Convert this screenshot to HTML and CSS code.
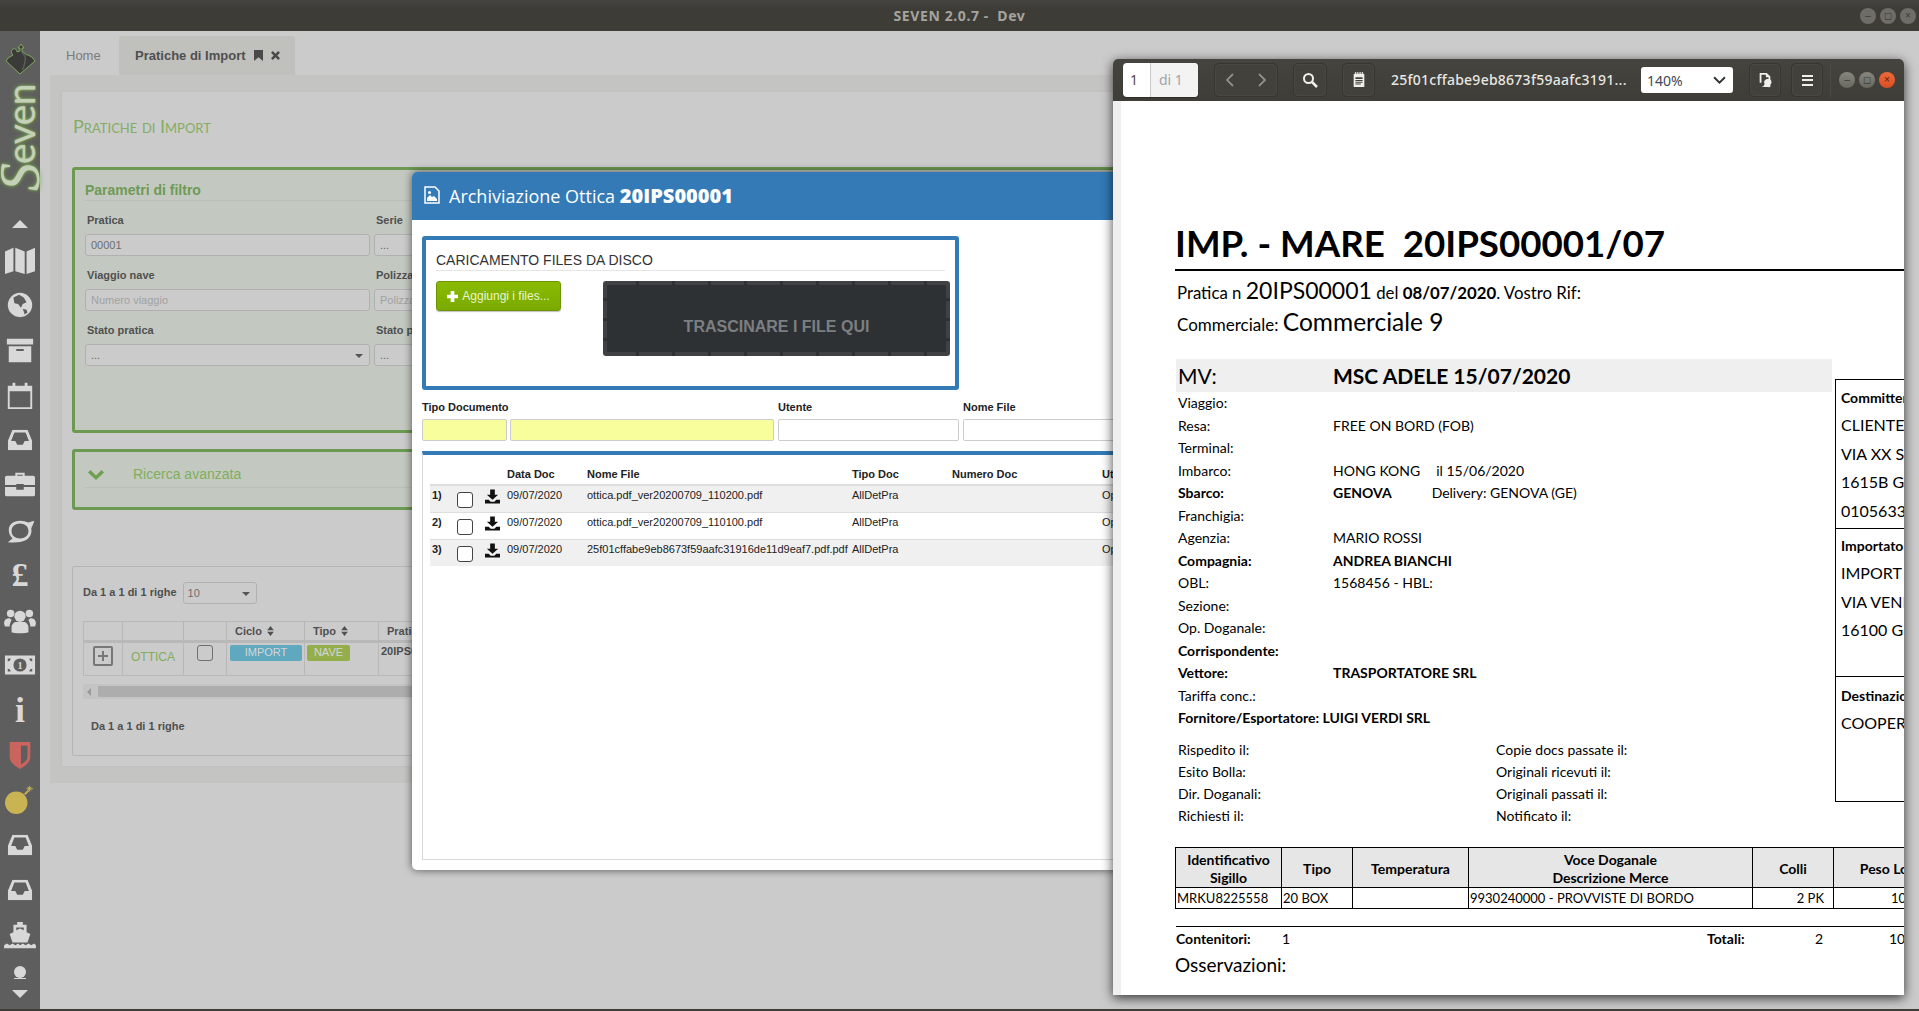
FILE: index.html
```html
<!DOCTYPE html>
<html lang="en">
<head>
    <meta charset="UTF-8">
    <title>SEVEN 2.0.7 - Dev</title>
    <link rel="stylesheet" href="styles.css">
</head>
<body>
    <svg class="defs" width="0" height="0">
        <symbol id="i-inbox" viewBox="0 0 26 22"><path d="M5 0h16l5 12v10H0V12zM7 3L3.5 12H8l2 4h6l2-4h4.500L19 3z" fill-rule="evenodd"/></symbol>
        <symbol id="i-download" viewBox="0 0 16 15"><path d="M5.500 0h5v5.500H14L8 11 2 5.500h3.500zM0 11h4l2 2h4l2-2h4v4H0z"/></symbol>
        <symbol id="i-sort" viewBox="0 0 8 12"><path d="M4 0l4 5H0zM4 12L0 7h8z"/></symbol>
    </svg>

    <header class="titlebar">
        <span class="titlebar-text">SEVEN 2.0.7 - &nbsp;Dev</span>
        <div class="titlebar-btns">
            <span class="wm-btn">&#8211;</span>
            <span class="wm-btn">&#9723;</span>
            <span class="wm-btn">&#215;</span>
        </div>
    </header>

    <div class="app">
        <nav class="sidebar">
            <svg class="logo-mark" viewBox="1 0 30 31">
                <path d="M16 30L2 17l2-3 5-3c-2-2-2-5 0-6 2-1 4 1 4 3l3-1V4l-2 0 3-4 3 4h-2v4c3 0 3 3 6 3l4 2 3 4z" fill="#3b3b39" stroke="#7fa95a" stroke-width="1"/>
                <path d="M18 9c3 2 4 4 3 8-1 3 0 6-3 9" fill="none" stroke="#5e5e5e" stroke-width="1.400"/>
            </svg>
            <div class="logo-text"><span class="logo-s">S</span>even</div>
            <div class="nav-icons">
                <svg class="ni ni-caret" viewBox="0 0 12 6"><path d="M6 0l6 6H0z"/></svg>
                <svg class="ni" viewBox="0 0 32 32"><path d="M0 7l9-4v25l-9 3zM11 3l10 4v24l-10-3zM23 7l9-4v25l-9 3z"/></svg>
                <svg class="ni" viewBox="0 0 32 32"><circle cx="16" cy="16" r="13"/><path d="M9 8l6-3 5 3 3 5-4 2-2 4-3-4-4-1zM19 20l4 1 1 3-3 2z" fill="#5e5e5e"/></svg>
                <svg class="ni" viewBox="0 0 32 32"><path d="M2 4h28v6H2zM4 12h24v17H4zM12 15v2h8v-2z" fill-rule="evenodd"/></svg>
                <svg class="ni" viewBox="0 0 32 32"><path d="M3 6h5V3h3v3h10V3h3v3h5v25H3zM5 12v17h22V12z" fill-rule="evenodd"/></svg>
                <svg class="ni" viewBox="0 0 32 32"><use href="#i-inbox" x="3" y="5" width="26" height="22"/></svg>
                <svg class="ni" viewBox="0 0 32 32"><path d="M11 6V3h10v3h9a2 2 0 0 1 2 2v8H20v-1h-8v1H0V8a2 2 0 0 1 2-2zM13 5v1h6V5zM0 18h12v3h8v-3h12v8a2 2 0 0 1-2 2H2a2 2 0 0 1-2-2z" fill-rule="evenodd"/></svg>
                <svg class="ni" viewBox="0 0 32 32"><path d="M16 6c-7 0-12 4-12 10 0 4 2 7 4 9l-5 4c9 1 14 0 19-2 5-3 7-8 6-13 2-4 3-6 3-8l-6 2c-2-1-6-2-9-2zm0 3c5 0 9 3 9 8s-4 8-9 8-9-3-9-8 4-8 9-8z" fill-rule="evenodd"/></svg>
                <span class="ni-glyph">&#163;</span>
                <svg class="ni" viewBox="0 0 34 32"><circle cx="7" cy="9" r="4"/><circle cx="27" cy="9" r="4"/><circle cx="17" cy="12" r="6"/><path d="M0 20c0-5 3-6 6-6l2 2c-1 2-2 4-2 7H1zM34 20c0-5-3-6-6-6l-2 2c1 2 2 4 2 7h5zM8 29v-5c0-4 3-6 5-6h8c2 0 5 2 5 6v5c-2 1-5 1-9 1s-7 0-9-1z"/></svg>
                <svg class="ni" viewBox="0 0 34 24"><path d="M1 2h32v20H1zM4 5v14h3c0-2-1-3-3-3V8c2 0 3-1 3-3zM30 5h-3c0 2 1 3 3 3zM30 16c-2 0-3 1-3 3h3z" fill-rule="evenodd"/><circle cx="17" cy="12" r="7" fill="#5e5e5e"/><text class="ni-one" x="17" y="16">1</text></svg>
                <span class="ni-glyph ni-i">i</span>
                <svg class="ni" viewBox="0 0 32 32"><path d="M5 2h22v16c0 6-6 10-11 13C11 28 5 24 5 18z" fill="#c9645e"/><path d="M17 6h7v12c0 3-3 6-7 8z" fill="#5e5e5e"/></svg>
                <svg class="ni" viewBox="0 0 32 32"><circle cx="12" cy="19" r="12" fill="#c9b352"/><path d="M21 10l4-4" stroke="#c9b352" stroke-width="2"/><path d="M26 1v6M23 4h7M24 2l4 4M28 2l-4 4" stroke="#c9b352" stroke-width="1"/></svg>
                <svg class="ni" viewBox="0 0 32 32"><use href="#i-inbox" x="3" y="5" width="26" height="22"/></svg>
                <svg class="ni" viewBox="0 0 32 32"><use href="#i-inbox" x="3" y="5" width="26" height="22"/></svg>
                <svg class="ni" viewBox="0 0 34 32"><path d="M14 2h6v3h4v8l4 2-3 9H9L6 15l4-2V5h4zM13 8v3l4-2 4 2V8z" fill-rule="evenodd"/><path d="M0 27l3-2 3 2 3-2 3 2 3-2 2 2 3-2 3 2 3-2 3 2 3-2 2 2v3H0z"/></svg>
            </div>
            <div class="nav-user">
                <svg class="ni ni-user" viewBox="0 0 14 13"><circle cx="7" cy="6" r="6"/><path d="M1 13h12v-1H1z"/></svg>
                <svg class="ni ni-caret" viewBox="0 0 12 6"><path d="M0 0h12L6 6z"/></svg>
            </div>
        </nav>

        <main class="main">
            <div class="tabs">
                <span class="tab">Home</span>
                <span class="tab tab-active">Pratiche di Import
                    <svg class="tab-ic" viewBox="0 0 10 12"><path d="M0 0h10v12L5 8l-5 4z"/></svg>
                    <svg class="tab-ic" viewBox="0 0 10 10"><path d="M2 0l3 3 3-3 2 2-3 3 3 3-2 2-3-3-3 3-2-2 3-3-3-3z"/></svg>
                </span>
            </div>
            <div class="tab-content">
                <div class="page">
                    <h1 class="page-title">Pratiche di Import</h1>

                    <section class="panel panel-filter">
                        <h3 class="panel-title">Parametri di filtro</h3>
                        <div class="filter-grid">
                            <div class="field"><label>Pratica</label><div class="fake-input">00001</div></div>
                            <div class="field"><label>Serie</label><div class="fake-input dots">...</div></div>
                            <div class="field"><label>Viaggio nave</label><div class="fake-input ph">Numero viaggio</div></div>
                            <div class="field"><label>Polizza</label><div class="fake-input ph">Polizza</div></div>
                            <div class="field"><label>Stato pratica</label><div class="fake-input fake-select dots">...</div></div>
                            <div class="field"><label>Stato pagamento</label><div class="fake-input dots">...</div></div>
                        </div>
                    </section>

                    <section class="panel panel-search">
                        <div class="search-head">
                            <svg class="chev" viewBox="0 0 16 10"><path d="M2.500 0L8 5.500 13.500 0 16 2.500 8 10 0 2.500z"/></svg>
                            <span>Ricerca avanzata</span>
                        </div>
                    </section>

                    <section class="grid-box">
                        <div class="grid-top">
                            <span class="grid-count">Da 1 a 1 di 1 righe</span>
                            <div class="fake-input page-size">10</div>
                        </div>
                        <table class="grid-table">
                            <colgroup><col class="c1"><col class="c2"><col class="c3"><col class="c4"><col class="c5"><col class="c6"></colgroup>
                            <thead>
                                <tr>
                                    <th></th><th></th><th></th>
                                    <th>Ciclo <svg class="sort"><use href="#i-sort"/></svg></th>
                                    <th>Tipo <svg class="sort"><use href="#i-sort"/></svg></th>
                                    <th>Pratica</th>
                                </tr>
                            </thead>
                            <tbody>
                                <tr>
                                    <td class="center"><span class="plus-box"></span></td>
                                    <td class="ottica">OTTICA</td>
                                    <td class="center"><span class="check check-dim"></span></td>
                                    <td><span class="badge badge-blue">IMPORT</span></td>
                                    <td><span class="badge badge-green">NAVE</span></td>
                                    <td class="bold-cell">20IPS00001</td>
                                </tr>
                            </tbody>
                        </table>
                        <div class="hscroll"><span class="hscroll-arrow"></span><span class="hscroll-thumb"></span></div>
                        <div class="grid-bottom">Da 1 a 1 di 1 righe</div>
                    </section>
                </div>
            </div>
        </main>
    </div>

    <!-- modal archiviazione -->
    <div class="modal">
        <div class="modal-head">
            <svg class="modal-ic" viewBox="0 0 16 18"><path d="M1 1h10l4 4v12H1z" fill="none" stroke="#fff" stroke-width="1.500"/><path d="M3 15v-3l3-3 2 2 2-1 3 3v2z" fill="#fff"/><circle cx="5.500" cy="6.500" r="1.500" fill="#fff"/></svg>
            <span>Archiviazione Ottica <b>20IPS00001</b></span>
        </div>
        <div class="modal-body">
            <div class="upload-box">
                <div class="upload-title">CARICAMENTO FILES DA DISCO</div>
                <div class="upload-row">
                    <button class="add-btn"><svg class="add-ic" viewBox="0 0 12 12"><path d="M4 0h4v4h4v4H8v4H4V8H0V4h4z"/></svg>Aggiungi i files...</button>
                    <div class="dropzone">TRASCINARE I FILE QUI</div>
                </div>
            </div>
            <div class="search-fields">
                <div class="sf sf-tipo">
                    <label>Tipo Documento</label>
                    <div class="sf-pair"><span class="sf-input yellow sf-code"></span><span class="sf-input yellow sf-desc"></span></div>
                </div>
                <div class="sf sf-user"><label>Utente</label><span class="sf-input"></span></div>
                <div class="sf sf-name"><label>Nome File</label><span class="sf-input"></span></div>
            </div>
            <div class="files-frame">
                <table class="files">
                    <colgroup><col class="f1"><col class="f2"><col class="f3"><col class="f4"><col class="f5"><col class="f6"><col class="f7"><col class="f8"></colgroup>
                    <thead>
                        <tr><th></th><th></th><th></th><th>Data Doc</th><th>Nome File</th><th>Tipo Doc</th><th>Numero Doc</th><th>Utente</th></tr>
                    </thead>
                    <tbody>
                        <tr>
                            <td class="idx">1)</td><td><span class="check"></span></td><td><svg class="dl"><use href="#i-download"/></svg></td>
                            <td>09/07/2020</td><td>ottica.pdf_ver20200709_110200.pdf</td><td>AllDetPra</td><td></td><td>Op</td>
                        </tr>
                        <tr>
                            <td class="idx">2)</td><td><span class="check"></span></td><td><svg class="dl"><use href="#i-download"/></svg></td>
                            <td>09/07/2020</td><td>ottica.pdf_ver20200709_110100.pdf</td><td>AllDetPra</td><td></td><td>Op</td>
                        </tr>
                        <tr>
                            <td class="idx">3)</td><td><span class="check"></span></td><td><svg class="dl"><use href="#i-download"/></svg></td>
                            <td>09/07/2020</td><td>25f01cffabe9eb8673f59aafc31916de11d9eaf7.pdf.pdf</td><td>AllDetPra</td><td></td><td>Op</td>
                        </tr>
                    </tbody>
                </table>
            </div>
        </div>
    </div>

    <!-- finestra pdf -->
    <div class="pdf-window">
        <div class="pdf-toolbar">
            <div class="pg-entry"><span class="pg-num">1</span><span class="pg-of">di 1</span></div>
            <div class="tb-btn tb-nav">
                <svg class="tb-ic" viewBox="0 0 10 16"><path d="M8 2L2 8l6 6" fill="none" stroke="#8f8e88" stroke-width="1.800"/></svg>
                <svg class="tb-ic" viewBox="0 0 10 16"><path d="M2 2l6 6-6 6" fill="none" stroke="#8f8e88" stroke-width="1.800"/></svg>
            </div>
            <div class="tb-btn tb-search"><svg class="tb-ic" viewBox="0 0 16 16"><circle cx="6.500" cy="6.500" r="4.500" fill="none" stroke="#f0efec" stroke-width="2"/><path d="M10 10l5 5" stroke="#f0efec" stroke-width="2.500"/></svg></div>
            <div class="tb-btn tb-doc"><svg class="tb-ic" viewBox="0 0 14 18"><path d="M2 2h10a1 1 0 0 1 1 1v13a1 1 0 0 1-1 1H2a1 1 0 0 1-1-1V3a1 1 0 0 1 1-1zM3 6v2h8V6zM3 9v1h8V9zM3 11v1h8v-1zM3 13v1h6v-1z" fill="#f0efec" fill-rule="evenodd"/><path d="M3 0v3M5 0v3M7 0v3M9 0v3M11 0v3" stroke="#f0efec"/></svg></div>
            <div class="pdf-name">25f01cffabe9eb8673f59aafc3191...</div>
            <div class="zoom-select"><span>140%</span><svg class="zoom-chev" viewBox="0 0 12 8"><path d="M1 1l5 5 5-5" fill="none" stroke="#333" stroke-width="1.800"/></svg></div>
            <div class="tb-btn tb-page"><svg class="tb-ic" viewBox="0 0 14 18"><path d="M1 1h8l4 4v12H4v-1h2l1-2a4 4 0 0 1-1-3 4 4 0 0 1 5-3V6H8V3H3v9H1z" fill="#f0efec"/><path d="M9 14a3 3 0 1 0-1-1l-2 3" fill="none" stroke="#f0efec" stroke-width="1.500"/><path d="M10 13l2 4" stroke="#f0efec" stroke-width="1.500"/></svg></div>
            <div class="tb-btn tb-menu"><span class="burger"></span></div>
            <div class="pdf-wm">
                <span class="wm-btn2">&#8211;</span>
                <span class="wm-btn2">&#9723;</span>
                <span class="wm-btn2 wm-close">&#215;</span>
            </div>
        </div>
        <div class="pdf-page">
            <h1 class="doc-title">IMP. - MARE &nbsp;20IPS00001/07</h1>
            <p class="doc-line">Pratica n <span class="big">20IPS00001</span> del <b>08/07/2020</b>. Vostro Rif:</p>
            <p class="doc-line doc-line2">Commerciale: <span class="big">Commerciale 9</span></p>

            <div class="doc-main">
                <div class="doc-left">
                    <div class="mv-row"><span class="mv-label">MV:</span><b>MSC ADELE 15/07/2020</b></div>
                    <div class="dl-row"><span>Viaggio:</span></div>
                    <div class="dl-row"><span>Resa:</span><span>FREE ON BORD (FOB)</span></div>
                    <div class="dl-row"><span>Terminal:</span></div>
                    <div class="dl-row"><span>Imbarco:</span><span>HONG KONG<i class="sp1"></i>il 15/06/2020</span></div>
                    <div class="dl-row"><b>Sbarco:</b><span><b>GENOVA</b><i class="sp2"></i>Delivery: GENOVA (GE)</span></div>
                    <div class="dl-row"><span>Franchigia:</span></div>
                    <div class="dl-row"><span>Agenzia:</span><span>MARIO ROSSI</span></div>
                    <div class="dl-row"><b>Compagnia:</b><b>ANDREA BIANCHI</b></div>
                    <div class="dl-row"><span>OBL:</span><span>1568456 - HBL:</span></div>
                    <div class="dl-row"><span>Sezione:</span></div>
                    <div class="dl-row"><span>Op. Doganale:</span></div>
                    <div class="dl-row"><b>Corrispondente:</b></div>
                    <div class="dl-row"><b>Vettore:</b><b>TRASPORTATORE SRL</b></div>
                    <div class="dl-row"><span>Tariffa conc.:</span></div>
                    <div class="dl-row"><b>Fornitore/Esportatore: LUIGI VERDI SRL</b></div>
                    <div class="dates">
                        <span>Rispedito il:</span><span>Copie docs passate il:</span>
                        <span>Esito Bolla:</span><span>Originali ricevuti il:</span>
                        <span>Dir. Doganali:</span><span>Originali passati il:</span>
                        <span>Richiesti il:</span><span>Notificato il:</span>
                    </div>
                </div>
                <div class="doc-right">
                    <div class="party party1">
                        <b>Committente</b><span>CLIENTE SPA</span><span>VIA XX SETTEMBRE</span><span>1615B GENOVA</span><span>01056330000</span>
                    </div>
                    <div class="party party2">
                        <b>Importatore</b><span>IMPORT SRL</span><span>VIA VENEZIA</span><span>16100 GENOVA</span>
                    </div>
                    <div class="party party3">
                        <b>Destinazione</b><span>COOPERATIVA</span>
                    </div>
                </div>
            </div>

            <table class="doc-table">
                <colgroup><col class="d1"><col class="d2"><col class="d3"><col class="d4"><col class="d5"><col class="d6"></colgroup>
                <thead>
                    <tr><th>Identificativo<br>Sigillo</th><th>Tipo</th><th>Temperatura</th><th>Voce Doganale<br>Descrizione Merce</th><th>Colli</th><th>Peso Lordo</th></tr>
                </thead>
                <tbody>
                    <tr><td>MRKU8225558</td><td>20 BOX</td><td></td><td>9930240000 - PROVVISTE DI BORDO</td><td class="num">2 PK</td><td class="num-left">10</td></tr>
                </tbody>
            </table>
            <div class="totals">
                <b>Contenitori:</b><span>1</span><b>Totali:</b><span>2</span><span>10</span>
            </div>
            <div class="notes">Osservazioni:</div>
        </div>
    </div>
</body>
</html>
```

FILE: styles.css
```css
* {
    box-sizing: border-box;
}
html, body {
    margin: 0;
    height: 100%;
}
body {
    width: 1919px;
    height: 1011px;
    overflow: hidden;
    position: relative;
    display: flex;
    flex-direction: column;
    font-family: "Liberation Sans", Arial, sans-serif;
    font-size: 11px;
    color: #4d4d4d;
    background-color: #cbcbcb;
    border-bottom: 2px solid #3e3d38;
}
.defs {
    position: absolute;
}

/* title bar */
.titlebar {
    height: 31px;
    flex: none;
    display: flex;
    align-items: center;
    justify-content: center;
    position: relative;
    background: linear-gradient(#454440, #3d3c37 30%);
}
.titlebar-text {
    font-family: "Noto Sans", sans-serif;
    font-weight: 700;
    font-size: 14px;
    letter-spacing: 0.6px;
    color: #a5a49e;
}
.titlebar-btns {
    position: absolute;
    right: 3px;
    top: 8px;
    display: flex;
    gap: 4px;
}
.wm-btn {
    width: 16px;
    height: 16px;
    border-radius: 50%;
    background-color: #6e6d68;
    color: #3e3d38;
    font-size: 10px;
    line-height: 16px;
    text-align: center;
}

/* app frame */
.app {
    flex: 1;
    display: flex;
    min-height: 0;
}
.sidebar {
    width: 40px;
    flex: none;
    background-color: #5e5e5e;
    display: flex;
    flex-direction: column;
    align-items: center;
}
.logo-mark {
    width: 32px;
    height: 31px;
    margin-top: 13px;
}
.logo-text {
    writing-mode: vertical-rl;
    transform: rotate(180deg);
    font-family: Lato, sans-serif;
    font-weight: 400;
    font-size: 39px;
    letter-spacing: -0.5px;
    line-height: 34px;
    height: 116px;
    margin-top: 0;
    white-space: nowrap;
    color: #c5d0ba;
    text-shadow: 0 0 2px #a4d46a, 0 0 5px #6f9d45;
}
.logo-s {
    font-family: "Liberation Serif", serif;
    font-style: italic;
    font-size: 56px;
    letter-spacing: -1px;
}
.nav-icons {
    margin-top: 29px;
    display: flex;
    flex-direction: column;
    align-items: center;
    gap: 15px;
}
.ni {
    display: block;
    width: 32px;
    height: 30px;
    fill: #d8d8d8;
}
.ni-caret {
    height: 8px;
}
.nav-icons .ni-caret {
    margin-bottom: 2px;
}
.ni-user {
    height: 13px;
}
.ni-glyph {
    display: block;
    height: 30px;
    line-height: 30px;
    font-family: "Liberation Serif", serif;
    font-weight: 700;
    font-size: 34px;
    color: #d8d8d8;
}
.ni-i {
    font-size: 36px;
}
.ni-one {
    font-family: "Liberation Serif", serif;
    font-weight: 700;
    font-size: 11px;
    text-anchor: middle;
    fill: #d8d8d8;
}
.nav-user {
    margin-top: 16px;
    display: flex;
    flex-direction: column;
    align-items: center;
    gap: 11px;
}

/* left app */
.main {
    flex: 1;
    min-width: 0;
    padding-left: 10px;
}
.tabs {
    height: 44px;
    padding-top: 5px;
    display: flex;
    font-size: 13px;
}
.tab {
    display: flex;
    align-items: center;
    padding: 0 16px;
    color: #7b7b7b;
    width: 69px;
    white-space: nowrap;
}
.tab-active {
    width: 176px;
    background-color: #c0c0bd;
    border-radius: 3px 3px 0 0;
    color: #4f4f4f;
    font-weight: 700;
    gap: 8px;
}
.tab-ic {
    width: 9px;
    height: 11px;
    flex: none;
    fill: #4a4a4a;
}
.tab-content {
    width: 1843px;
    height: 708px;
    background-color: #c4c4c2;
    padding: 17px 12px;
}
.page {
    height: 674px;
    background-color: #cbcbcb;
    box-shadow: 0 0 2px #b6b6b6;
    padding: 22px 10px 0;
}
.page-title {
    margin: 0 0 29px;
    height: 24px;
    line-height: 24px;
    padding-left: 1px;
    font-family: Lato, sans-serif;
    font-variant: small-caps;
    font-weight: 400;
    font-size: 18px;
    color: #84ad63;
}
.panel {
    border: 3px solid #6c9a52;
    border-radius: 3px;
    background-color: #c3c9c1;
    padding: 0 10px;
}
.panel-filter {
    height: 266px;
}
.panel-title {
    margin: 0;
    padding-top: 10px;
    height: 31px;
    line-height: 20px;
    font-size: 14px;
    color: #6f9a55;
    border-bottom: 1px solid #b9bfb6;
}
.filter-grid {
    display: grid;
    grid-template-columns: 285px 285px;
    column-gap: 4px;
    padding-top: 11px;
}
.field {
    height: 55px;
}
.field label {
    display: block;
    height: 15px;
    line-height: 17px;
    margin-bottom: 7px;
    padding-left: 2px;
    font-weight: 700;
    color: #505050;
}
.fake-input {
    height: 22px;
    line-height: 20px;
    padding-left: 5px;
    border: 1px solid #b1b1b1;
    border-radius: 3px;
    background-color: #cbcbcb;
    color: #6e6e6e;
    position: relative;
}
.ph {
    color: #a2a2a2;
}
.dots {
    color: #666;
}
.fake-select::after,
.page-size::after {
    content: "";
    position: absolute;
    right: 6px;
    top: 9px;
    border: 4px solid transparent;
    border-top-color: #555;
    border-bottom: 0;
}
.panel-search {
    height: 61px;
    margin-top: 16px;
}
.search-head {
    height: 24px;
    margin-top: 12px;
    display: flex;
    align-items: flex-start;
    border-bottom: 1px solid #b9bfb6;
    font-size: 14px;
    line-height: 21px;
    color: #7fae5c;
}
.chev {
    width: 16px;
    height: 10px;
    margin: 6px 29px 0 3px;
    fill: #6f9f50;
}
.grid-box {
    margin-top: 56px;
    height: 190px;
    border: 1px solid #b5b5b5;
    border-radius: 2px;
    padding: 15px 10px 0;
    overflow: hidden;
}
.grid-top {
    display: flex;
    align-items: center;
    gap: 6px;
    height: 21px;
    font-weight: 700;
    color: #505050;
}
.grid-count {
    padding-bottom: 2px;
}
.page-size {
    width: 74px;
    padding-left: 4px;
    font-weight: 400;
    font-size: 11px;
}
.grid-table {
    margin-top: 18px;
    border-collapse: collapse;
    table-layout: fixed;
    width: 940px;
}
.c1 { width: 39px; }
.c2 { width: 61px; }
.c3 { width: 43px; }
.c4 { width: 78px; }
.c5 { width: 74px; }
.c6 { width: 645px; }
.grid-table th,
.grid-table td {
    border: 1px solid #b8b8b8;
    padding: 0;
}
.grid-table th {
    height: 20px;
    text-align: left;
    padding-left: 8px;
    border-bottom: 3px solid #b8b8b8;
    color: #505050;
}
.grid-table td {
    height: 34px;
    vertical-align: top;
    padding: 2px;
}
.sort {
    width: 7px;
    height: 10px;
    margin-left: 2px;
    fill: #505050;
    vertical-align: -1px;
}
.center {
    text-align: center;
}
.plus-box {
    display: inline-block;
    width: 20px;
    height: 20px;
    margin-top: 1px;
    border: 2px solid #777;
    border-radius: 2px;
    background:
        linear-gradient(#777, #777) center / 10px 2px no-repeat,
        linear-gradient(#777, #777) center / 2px 10px no-repeat;
}
.grid-table td.ottica {
    font-size: 12px;
    padding: 7px 0 0;
    text-align: center;
    color: #7fae5c;
}
.check {
    display: inline-block;
    width: 16px;
    height: 16px;
    border: 1.500px solid #444;
    border-radius: 3px;
    background-color: #fff;
}
.check-dim {
    border-color: #6f6f6f;
    background-color: #cbcbcb;
}
.badge {
    display: inline-block;
    height: 16px;
    line-height: 14px;
    border-radius: 2px;
    text-align: center;
    color: #d6d6d6;
}
.badge-blue {
    width: 72px;
    margin-left: 1px;
    background-color: #5fa8c0;
}
.badge-green {
    width: 43px;
    background-color: #94ae4c;
}
.grid-table td.bold-cell {
    padding-left: 2px;
    font-weight: 700;
}
.hscroll {
    margin-top: 8px;
    height: 15px;
    display: flex;
    align-items: center;
    background-color: #c4c4c4;
    position: relative;
    padding-left: 15px;
}
.hscroll-arrow {
    position: absolute;
    left: 4px;
    top: 4px;
    border: 4px solid transparent;
    border-right-color: #999;
    border-left: 0;
}
.hscroll-thumb {
    flex: 1;
    height: 11px;
    background-color: #adadad;
}
.grid-bottom {
    margin-top: 20px;
    padding-left: 8px;
    line-height: 14px;
    font-weight: 700;
    color: #505050;
}

/* modal */
.modal {
    position: absolute;
    left: 412px;
    top: 172px;
    width: 799px;
    height: 698px;
    border-radius: 5px;
    background-color: #fff;
    box-shadow: 0 0 8px rgba(0, 0, 0, 0.6);
    overflow: hidden;
}
.modal-head {
    height: 48px;
    padding: 0 0 2px 12px;
    background-color: #337ab7;
    display: flex;
    align-items: center;
    gap: 9px;
    font-family: "Open Sans", sans-serif;
    font-size: 18px;
    color: #fff;
}
.modal-head b {
    font-weight: 800;
    font-size: 20px;
}
.modal-ic {
    width: 16px;
    height: 18px;
}
.modal-body {
    padding: 16px 0 0 10px;
    color: #222;
}
.upload-box {
    width: 537px;
    height: 154px;
    border: 4px solid #337ab7;
    border-radius: 3px;
    padding: 10px;
}
.upload-title {
    height: 21px;
    line-height: 20px;
    font-size: 14px;
    color: #333;
    border-bottom: 1px solid #e5e5e5;
}
.upload-row {
    display: flex;
    margin-top: 10px;
}
.add-btn {
    width: 125px;
    height: 30px;
    flex: none;
    padding: 0;
    border: 1px solid #6d9500;
    border-radius: 3px;
    background: linear-gradient(#8abb00, #7aaa00);
    box-shadow: 0 1px 1px rgba(0, 0, 0, 0.25);
    color: #e9f5d0;
    font-family: "Liberation Sans", sans-serif;
    font-size: 12px;
    display: flex;
    align-items: center;
    justify-content: center;
    gap: 4px;
}
.add-ic {
    width: 11px;
    height: 11px;
    fill: #fff;
}
.dropzone {
    width: 347px;
    height: 75px;
    flex: none;
    margin-left: 42px;
    border-radius: 3px;
    background:
        repeating-linear-gradient(90deg, #3f4245 0 33px, #2e3134 33px 36px) 0 0 / 100% 4px no-repeat,
        repeating-linear-gradient(90deg, #3f4245 0 33px, #2e3134 33px 36px) 0 100% / 100% 4px no-repeat,
        repeating-linear-gradient(#3f4245 0 17px, #2e3134 17px 20px) 0 0 / 4px 100% no-repeat,
        repeating-linear-gradient(#3f4245 0 17px, #2e3134 17px 20px) 100% 0 / 4px 100% no-repeat,
        #2e3134;
    color: #7c7f81;
    font-size: 16px;
    font-weight: 700;
    text-align: center;
    padding-top: 36px;
    line-height: 20px;
}
.search-fields {
    display: flex;
    gap: 4px;
    margin-top: 10px;
}
.sf label {
    display: block;
    height: 14px;
    line-height: 14px;
    margin-bottom: 5px;
    font-weight: 700;
}
.sf-tipo { width: 352px; }
.sf-user { width: 181px; }
.sf-name { width: 240px; }
.sf-pair {
    display: flex;
    gap: 3px;
}
.sf-input {
    display: block;
    height: 22px;
    border: 1px solid #ccc;
    border-radius: 2px;
}
.sf-code { width: 85px; }
.sf-desc { width: 264px; }
.yellow {
    background-color: #f8fe9c;
}
.files-frame {
    margin-top: 10px;
    width: 800px;
    height: 409px;
    border-top: 4px solid #337ab7;
    border-left: 1px solid #d8d8d8;
    border-bottom: 1px solid #d8d8d8;
    padding-left: 7px;
}
.files {
    width: 792px;
    border-collapse: collapse;
    table-layout: fixed;
}
.f1 { width: 22px; }
.f2 { width: 29px; }
.f3 { width: 25px; }
.f4 { width: 80px; }
.f5 { width: 265px; }
.f6 { width: 100px; }
.f7 { width: 150px; }
.f8 { width: 121px; }
.files th {
    height: 30px;
    text-align: left;
    vertical-align: bottom;
    padding: 0 0 4px 1px;
    border-bottom: 2px solid #dedede;
}
.files td {
    height: 27px;
    vertical-align: top;
    padding: 2px 0 0 1px;
    line-height: 14px;
    border-top: 1px solid #ddd;
    white-space: nowrap;
    overflow: hidden;
}
.files tbody tr:nth-child(odd) {
    background-color: #f0f0f0;
}
.files td.idx {
    padding-left: 2px;
    font-weight: 700;
}
.files .check {
    margin: 4px 0 0 4px;
}
.dl {
    display: block;
    width: 15px;
    height: 15px;
    margin: 1px 0 0 3px;
    fill: #111;
}

/* pdf viewer window */
.pdf-window {
    position: absolute;
    left: 1113px;
    top: 59px;
    width: 791px;
    height: 936px;
    border-radius: 5px 5px 0 0;
    background-color: #efefef;
    box-shadow: 0 3px 12px rgba(0, 0, 0, 0.75);
    overflow: hidden;
    display: flex;
    flex-direction: column;
}
.pdf-toolbar {
    height: 42px;
    flex: none;
    padding-top: 4px;
    display: flex;
    align-items: flex-start;
    padding-left: 10px;
    background: linear-gradient(#45443e, #3e3d37);
}
.pg-entry {
    width: 75px;
    height: 34px;
    display: flex;
    background-color: #fff;
    border-radius: 4px;
    font-family: "Noto Sans", sans-serif;
    font-size: 14px;
    line-height: 34px;
    box-shadow: 0 1px 1px #2d2c28;
}
.pg-num {
    width: 28px;
    padding-left: 7px;
    color: #5e4a3e;
    border-right: 1px solid #c8c8c8;
}
.pg-of {
    flex: 1;
    padding-left: 8px;
    color: #a5a5a5;
    background-color: #f3f3f3;
    border-radius: 0 4px 4px 0;
}
.tb-btn {
    height: 34px;
    border: 1px solid #363530;
    border-radius: 5px;
    box-shadow: inset 0 0 0 1px rgba(255, 255, 255, 0.04);
    background-color: #42413b;
    display: flex;
    align-items: center;
    justify-content: center;
}
.tb-ic {
    width: 16px;
    height: 16px;
}
.tb-nav {
    width: 64px;
    margin-left: 16px;
    gap: 16px;
}
.tb-search {
    width: 34px;
    margin-left: 15px;
}
.tb-doc {
    width: 33px;
    margin-left: 15px;
}
.pdf-name {
    width: 240px;
    margin-left: 16px;
    line-height: 34px;
    font-family: "Noto Sans", sans-serif;
    font-weight: 500;
    font-size: 14px;
    letter-spacing: 0.25px;
    color: #e8e7e3;
    white-space: nowrap;
}
.zoom-select {
    width: 92px;
    height: 26px;
    margin: 4px 0 0 10px;
    padding: 0 7px 0 6px;
    background-color: #fff;
    border-radius: 3px;
    display: flex;
    align-items: center;
    justify-content: space-between;
    font-family: "Noto Sans", sans-serif;
    font-size: 14px;
    color: #3c4a5a;
}
.zoom-chev {
    width: 13px;
    height: 9px;
}
.tb-page {
    width: 32px;
    margin-left: 16px;
}
.tb-menu {
    width: 32px;
    margin-left: 10px;
}
.burger {
    width: 11px;
    height: 11px;
    border-top: 2px solid #f0efec;
    border-bottom: 2px solid #f0efec;
    background: linear-gradient(#f0efec, #f0efec) center / 100% 2px no-repeat;
}
.pdf-wm {
    display: flex;
    gap: 4px;
    margin: 0 0 0 7px;
    padding: 9px 0 0 8px;
    height: 34px;
    border-left: 1px solid #4c4b45;
}
.wm-btn2 {
    width: 16px;
    height: 16px;
    border-radius: 50%;
    background: linear-gradient(#88877f, #696860);
    color: #3e3d38;
    font-size: 10px;
    line-height: 16px;
    text-align: center;
}
.wm-close {
    background: linear-gradient(#ee6a3a, #d94e22);
    color: #5a2010;
}
.pdf-page {
    flex: 1;
    margin-left: 8px;
    padding: 118px 0 0 55px;
    background-color: #fff;
    color: #000;
    font-family: Lato, sans-serif;
    font-size: 14px;
    overflow: hidden;
}
.doc-title {
    margin: 0 0 6px -1px;
    height: 52px;
    line-height: 48px;
    border-bottom: 2px solid #000;
    font-size: 36.700px;
    font-weight: 700;
    white-space: nowrap;
}
.doc-line {
    margin: 0;
    height: 28px;
    line-height: 26px;
    padding-left: 1px;
    font-size: 16.800px;
    white-space: nowrap;
}
.doc-line2 {
    margin-top: 3px;
    line-height: 28px;
    font-size: 17px;
}
.big {
    font-size: 23px;
}
.doc-line2 .big {
    font-size: 24.500px;
}
.doc-main {
    display: flex;
    align-items: flex-start;
    margin-top: 23px;
    width: 800px;
}
.doc-left {
    width: 656px;
    flex: none;
}
.mv-row {
    height: 33px;
    line-height: 33px;
    padding-left: 2px;
    background-color: #efefef;
    font-size: 21px;
    display: flex;
}
.mv-label {
    width: 155px;
}
.dl-row {
    height: 22.500px;
    line-height: 22.500px;
    padding-left: 2px;
    display: flex;
    white-space: nowrap;
}
.dl-row > :first-child:not(:only-child) {
    width: 155px;
    flex: none;
}
.sp1 {
    display: inline-block;
    width: 16px;
}
.sp2 {
    display: inline-block;
    width: 40px;
}
.dates {
    display: grid;
    grid-template-columns: 318px 1fr;
    padding: 9px 0 0 2px;
    line-height: 22.300px;
}
.doc-right {
    width: 130px;
    margin: 20px 0 0 3px;
    flex: none;
    border: 1px solid #000;
    border-right: 0;
    padding-left: 5px;
    font-size: 16px;
    white-space: nowrap;
    height: 423px;
}
.party {
    display: flex;
    flex-direction: column;
    margin-left: -5px;
    padding-left: 5px;
    line-height: 28.500px;
}
.party b {
    font-size: 14px;
    line-height: 26px;
}
.party1 {
    height: 149px;
    padding-top: 5px;
    border-bottom: 1px solid #000;
}
.party2 {
    height: 148px;
    padding-top: 4px;
    border-bottom: 1px solid #000;
}
.party3 {
    padding-top: 6px;
}
.doc-table {
    margin: 19px 0 0 -1px;
    border-collapse: collapse;
    table-layout: fixed;
    width: 780px;
    font-size: 13px;
}
.d1 { width: 106px; }
.d2 { width: 71px; }
.d3 { width: 116px; }
.d4 { width: 284px; }
.d5 { width: 81px; }
.d6 { width: 122px; }
.doc-table th,
.doc-table td {
    border: 1px solid #000;
    padding: 0 1px;
    white-space: nowrap;
}
.doc-table th {
    height: 40px;
    padding-top: 3px;
    line-height: 18px;
    background-color: #e6e6e6;
    font-size: 14px;
    font-weight: 700;
}
.doc-table td {
    height: 21px;
    padding-top: 1px;
}
.doc-table td.num {
    text-align: right;
    padding-right: 9px;
}
.doc-table td.num-left {
    padding-left: 57px;
}
.totals {
    display: grid;
    grid-template-columns: 106px 425px 108px 74px 40px;
    margin: 17px 0 0 0;
    border-top: 1px solid #000;
    width: 800px;
    padding-top: 2px;
    line-height: 20px;
    font-size: 14px;
}
.notes {
    margin: 4px 0 0 -1px;
    line-height: 24px;
    font-size: 19px;
}
```
